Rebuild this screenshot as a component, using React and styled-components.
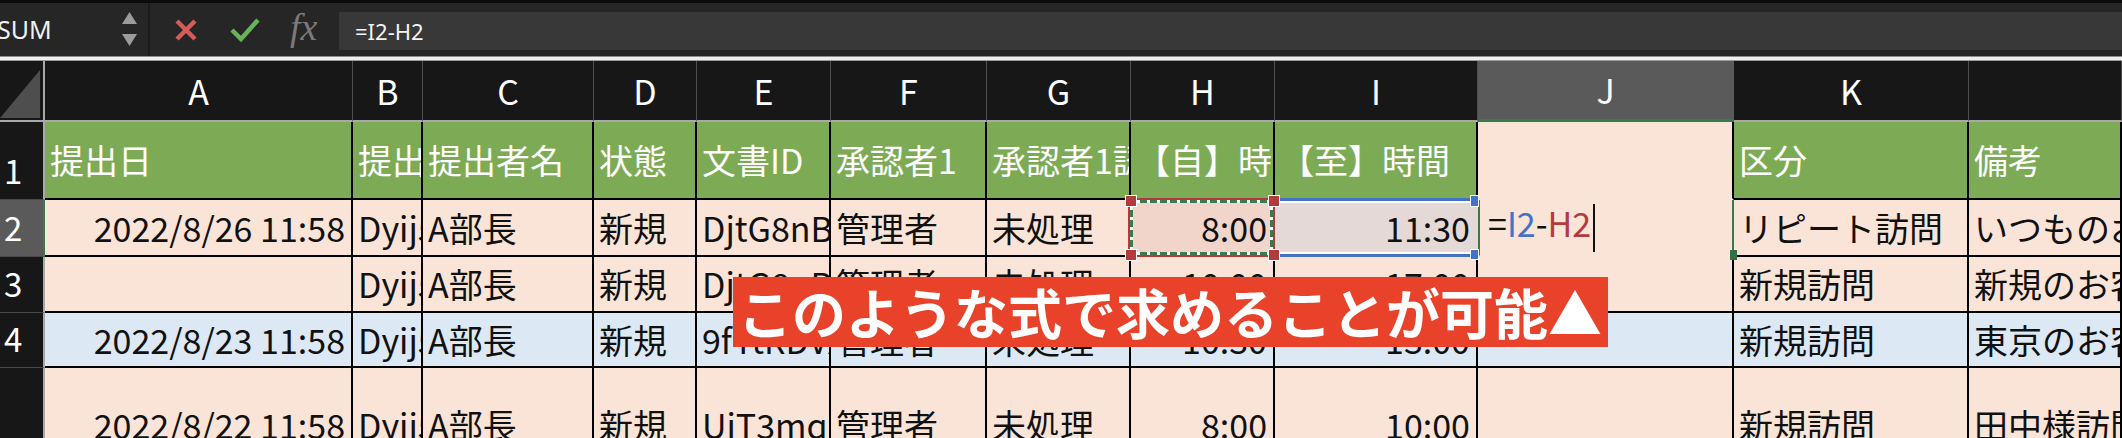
import React from 'react';
import styled, { createGlobalStyle } from 'styled-components';

const GREEN = '#7dab55';
const PEACH = '#f9e4d7';
const BLUE = '#dde8f5';
const CJK = `"Noto Sans CJK JP", "Noto Sans", sans-serif`;

const GlobalStyle = createGlobalStyle`
  html, body { margin: 0; padding: 0; background: #171717; }
  body { font-family: ${CJK}; }
`;

const Page = styled.div`
  position: relative;
  width: 2122px;
  height: 438px;
  overflow: hidden;
  background: #171717;
  display: flex;
  flex-direction: column;
`;

const Toolbar = styled.div`
  display: flex;
  align-items: stretch;
  height: 53px;
  flex-shrink: 0;
  border-top: 3px solid #0b0b0b;
  background: #262626;
`;

const NameBox = styled.div`
  width: 150px;
  flex-shrink: 0;
  box-sizing: border-box;
  border-right: 2px solid #1b1b1b;
  display: flex;
  align-items: center;
  justify-content: space-between;
  padding-right: 11px;
`;

const NameText = styled.span`
  font-family: "Noto Sans", sans-serif;
  font-size: 25px;
  color: #f0f0f0;
  margin-left: -3px;
  margin-top: -2px;
`;

const Spinner = styled.div`
  display: flex;
  flex-direction: column;
  gap: 10px;
  margin-top: -2px;
`;

const Actions = styled.div`
  width: 189px;
  flex-shrink: 0;
  box-sizing: border-box;
  display: flex;
  align-items: center;
  padding-left: 24px;
  gap: 32px;
`;

const Fx = styled.span`
  font-family: "Liberation Serif", serif;
  font-style: italic;
  font-size: 38px;
  line-height: 1;
  color: #7a7a7a;
  margin-top: -6px;
  margin-left: -2px;
`;

const FormulaBox = styled.div`
  flex: 1;
  margin: 9px 0 6px 0;
  background: #383838;
  display: flex;
  align-items: center;
  padding-left: 16px;
  font-family: "Noto Sans", sans-serif;
  font-size: 22px;
  color: #f4f4f4;
`;

const HeaderRule = styled.div`
  height: 5px;
  flex-shrink: 0;
  background: linear-gradient(#8e8e8e 0, #8e8e8e 1px, #efefef 1px, #efefef 4px, #9a9a9a 4px);
`;

const COLS = [45, 308, 70, 171, 103, 134, 156, 144, 144, 203, 256, 235];

const Sheet = styled.div`
  display: grid;
  grid-template-columns: ${COLS.map((c) => c + 'px').join(' ')} 1fr;
  grid-template-rows: 61px 78px 57px 56px 55px 116px;
  font-family: ${CJK};
`;

const Corner = styled.div`
  box-sizing: border-box;
  background: #171717;
  border-right: 2px solid #a9a9a9;
  border-bottom: 2px solid #a9a9a9;
  display: flex;
  align-items: flex-end;
  padding-bottom: 2px;
`;

const ColHead = styled.div`
  box-sizing: border-box;
  display: flex;
  align-items: center;
  justify-content: center;
  color: #fff;
  font-size: 34px;
  line-height: 1;
  background: ${(p) => (p.$active ? '#5a5a5a' : '#171717')};
  border-right: 1px solid ${(p) => (p.$active ? '#5a5a5a' : '#4d4d4d')};
  border-bottom: ${(p) => (p.$active ? '3px solid #3a7a4a' : '2px solid #a9a9a9')};
`;

const RowHead = styled.div`
  box-sizing: border-box;
  display: flex;
  align-items: flex-end;
  padding: 0 0 12px 4px;
  color: #fff;
  font-size: 33px;
  line-height: 1;
  background: ${(p) => (p.$active ? '#5a5a5a' : '#171717')};
  border-right: 2px solid ${(p) => (p.$active ? '#3a7a4a' : '#a9a9a9')};
  border-bottom: 1px solid #4a4a4a;
`;

const Cell = styled.div`
  position: relative;
  box-sizing: border-box;
  display: flex;
  align-items: center;
  justify-content: ${(p) => (p.$right ? 'flex-end' : 'flex-start')};
  padding: 0 6px 0 5px;
  background: ${(p) => p.$bg};
  color: ${(p) => (p.$head ? '#fff' : '#111')};
  font-size: 34px;
  line-height: 1;
  white-space: nowrap;
  overflow: hidden;
  border-right: 2px solid ${(p) => p.$rc || '#000'};
  border-bottom: 2px solid ${(p) => (p.$noBottom ? 'transparent' : '#000')};
  border-left: ${(p) => (p.$lc ? `2px solid ${p.$lc}` : 'none')};
`;

const CopyCell = styled(Cell)`
  overflow: visible;
  z-index: 3;
`;

const RefCell = styled(Cell)`
  overflow: visible;
  z-index: 2;
`;

const FormulaCell = styled(Cell)`
  overflow: visible;
  z-index: 1;
  padding-left: 8px;
`;

const CopyFrame = styled.div`
  position: absolute;
  top: -2px;
  left: -3px;
  right: -2px;
  bottom: -2px;
  border: 2px solid #b33b3b;
  pointer-events: none;
  background:
    repeating-linear-gradient(90deg, #3b7a4d 0 7px, #fff 7px 10px) top / 100% 3px no-repeat,
    repeating-linear-gradient(90deg, #3b7a4d 0 7px, #fff 7px 10px) bottom / 100% 3px no-repeat,
    repeating-linear-gradient(180deg, #3b7a4d 0 7px, #fff 7px 10px) left / 3px 100% no-repeat,
    repeating-linear-gradient(180deg, #3b7a4d 0 7px, #fff 7px 10px) right / 3px 100% no-repeat;
`;

const RefFrame = styled.div`
  position: absolute;
  top: -2px;
  left: 0;
  right: 0;
  bottom: -2px;
  border-top: 3px solid #4472c4;
  border-bottom: 3px solid #4472c4;
  box-shadow: inset 0 2px 0 #fff, inset 0 -2px 0 #fff;
  pointer-events: none;
`;

const Handle = styled.span`
  position: absolute;
  box-sizing: border-box;
  width: ${(p) => p.$w}px;
  height: ${(p) => p.$h}px;
  background: ${(p) => p.$c};
  border: ${(p) => (p.$plain ? 'none' : '1.5px solid #fff')};
  z-index: 4;
`;

const CellText = styled.span`
  position: relative;
  z-index: 1;
`;

const Ref = styled.span`
  color: ${(p) => p.$c};
`;

const Caret = styled.span`
  display: inline-block;
  width: 2px;
  height: 48px;
  background: #111;
  margin-left: 2px;
  vertical-align: middle;
`;

const Banner = styled.div`
  position: absolute;
  left: 733px;
  top: 277px;
  height: 70px;
  box-sizing: border-box;
  padding: 0 6px 0 5px;
  background: #e8432a;
  color: #fff;
  font-family: ${CJK};
  font-weight: 700;
  font-size: 54px;
  line-height: 1;
  display: flex;
  align-items: center;
  white-space: nowrap;
  z-index: 10;
`;

const HEADS = ['A', 'B', 'C', 'D', 'E', 'F', 'G', 'H', 'I', 'J', 'K', ''];
const RIGHT = new Set([0, 7, 8]);

const ROWS = [
  {
    bg: GREEN,
    head: true,
    cells: ['提出日', '提出者ID', '提出者名', '状態', '文書ID', '承認者1', '承認者1認証', '【自】時間', '【至】時間', '', '区分', '備考'],
  },
  {
    bg: PEACH,
    cells: ['2022/8/26 11:58', 'Dyij5kPq', 'A部長', '新規', 'DjtG8nBx', '管理者', '未処理', '8:00', '11:30', '', 'リピート訪問', 'いつものお客様'],
  },
  {
    bg: PEACH,
    cells: ['', 'Dyij5kPq', 'A部長', '新規', 'DjtG8nBx', '管理者', '未処理', '10:00', '17:00', '', '新規訪問', '新規のお客様'],
  },
  {
    bg: BLUE,
    cells: ['2022/8/23 11:58', 'Dyij5kPq', 'A部長', '新規', '9fYtRDVx', '管理者', '未処理', '10:30', '13:00', '', '新規訪問', '東京のお客様'],
  },
  {
    bg: PEACH,
    cells: ['2022/8/22 11:58', 'Dyij5kPq', 'A部長', '新規', 'UiT3mqlx', '管理者', '未処理', '8:00', '10:00', '', '新規訪問', '田中様訪問'],
  },
];

function renderCell(row, ri, text, ci) {
  const right = !row.head && RIGHT.has(ci);
  const key = `${ri}-${ci}`;
  if (ri === 1 && ci === 7) {
    return (
      <CopyCell key={key} $bg="#f2d5ca" $right>
        <CopyFrame />
        <Handle $c="#b33b3b" $w={12} $h={12} style={{ left: -6, top: -5 }} />
        <Handle $c="#b33b3b" $w={12} $h={12} style={{ right: -7, top: -5 }} />
        <Handle $c="#b33b3b" $w={12} $h={12} style={{ left: -6, bottom: -6 }} />
        <Handle $c="#b33b3b" $w={12} $h={12} style={{ right: -7, bottom: -6 }} />
        <CellText>{text}</CellText>
      </CopyCell>
    );
  }
  if (ri === 1 && ci === 8) {
    return (
      <RefCell key={key} $bg="#e5d9d8" $right $rc="transparent">
        <RefFrame />
        <Handle $c="#4472c4" $w={9} $h={12} style={{ right: -3, top: -5 }} />
        <Handle $c="#4472c4" $w={9} $h={11} style={{ right: -3, bottom: -5 }} />
        <CellText>{text}</CellText>
      </RefCell>
    );
  }
  if (ri === 1 && ci === 9) {
    return (
      <FormulaCell key={key} $bg={PEACH} $lc="#3a7a4a" $rc="#3a7a4a" $noBottom>
        <CellText>
          =<Ref $c="#4472c4">I2</Ref>-<Ref $c="#b33b3b">H2</Ref>
          <Caret />
        </CellText>
        <Handle $c="#356f45" $w={7} $h={10} $plain style={{ right: -5, bottom: -5 }} />
      </FormulaCell>
    );
  }
  if (ci === 9) {
    return <Cell key={key} $bg={row.head ? PEACH : row.bg} $noBottom={ri < 2} />;
  }
  return (
    <Cell key={key} $bg={row.bg} $head={row.head} $right={right}>
      {text}
    </Cell>
  );
}

export default function App() {
  return (
    <>
      <GlobalStyle />
      <Page>
        <Toolbar>
          <NameBox>
            <NameText>SUM</NameText>
            <Spinner>
              <svg width="15" height="12" viewBox="0 0 15 12">
                <polygon points="7.5,0 15,12 0,12" fill="#9c9c9c" />
              </svg>
              <svg width="15" height="12" viewBox="0 0 15 12">
                <polygon points="0,0 15,0 7.5,12" fill="#9c9c9c" />
              </svg>
            </Spinner>
          </NameBox>
          <Actions>
            <svg width="24" height="22" viewBox="0 0 24 22">
              <path d="M3 2 L21 20 M21 2 L3 20" stroke="#d65c57" strokeWidth="4.5" fill="none" />
            </svg>
            <svg width="30" height="24" viewBox="0 0 30 24">
              <path d="M2 12 L11 21 L28 2" stroke="#67b456" strokeWidth="4.5" fill="none" />
            </svg>
            <Fx>fx</Fx>
          </Actions>
          <FormulaBox>=I2-H2</FormulaBox>
        </Toolbar>
        <HeaderRule />
        <Sheet>
          <Corner>
            <svg width="40" height="48" viewBox="0 0 40 48">
              <polygon points="0,48 40,0 40,48" fill="#4e4e4e" />
            </svg>
          </Corner>
          {HEADS.map((h, i) => (
            <ColHead key={i} $active={i === 9}>
              {h}
            </ColHead>
          ))}
          {ROWS.map((row, ri) => (
            <React.Fragment key={ri}>
              <RowHead $active={ri === 1}>{ri + 1}</RowHead>
              {row.cells.map((c, ci) => renderCell(row, ri, c, ci))}
            </React.Fragment>
          ))}
        </Sheet>
        <Banner>このような式で求めることが可能▲</Banner>
      </Page>
    </>
  );
}
